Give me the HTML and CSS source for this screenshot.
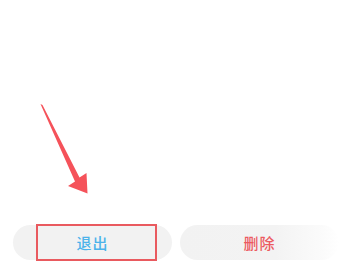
FILE: index.html
```html
<!DOCTYPE html>
<html lang="zh">
<head>
<meta charset="utf-8">
<link rel="stylesheet" href="styles.css">
</head>
<body>
<div class="screen">
  <svg class="arrow" width="360" height="270" viewBox="0 0 360 270">
    <polygon points="40.5,104 42.5,105 79.5,177.5 86.5,173 87.5,193.5 68,186 75,181.5" fill="#f5525a"/>
  </svg>
  <div class="actions">
    <div class="pill exit">
      <span>退出</span>
      <div class="highlight"></div>
    </div>
    <div class="pill delete">
      <span>删除</span>
    </div>
  </div>
</div>
</body>
</html>
```
FILE: styles.css
```css
html, body {
  margin: 0;
  padding: 0;
  background: #ffffff;
}
.screen {
  position: relative;
  width: 360px;
  height: 270px;
  overflow: hidden;
  font-family: "Noto Sans CJK SC", "Noto Sans", sans-serif;
}
.arrow {
  position: absolute;
  left: 0;
  top: 0;
}
.actions {
  display: flex;
  gap: 8px;
  padding: 225px 0 0 13px;
}
.pill {
  position: relative;
  width: 159px;
  height: 35px;
  border-radius: 18px;
  background: #f2f2f2;
  display: flex;
  align-items: center;
  justify-content: center;
  font-size: 15px;
  font-weight: 500;
  letter-spacing: 1px;
}
.exit span {
  color: #4cb2ea;
}
.delete {
  background: linear-gradient(to right, #f2f2f2 0%, #f3f3f3 60%, #fbfbfb 90%, #ffffff 100%);
}
.delete span {
  color: #ec5a61;
}
.highlight {
  position: absolute;
  left: 23px;
  top: -1px;
  width: 117px;
  height: 33px;
  border: 2px solid #e95a5f;
}
```
